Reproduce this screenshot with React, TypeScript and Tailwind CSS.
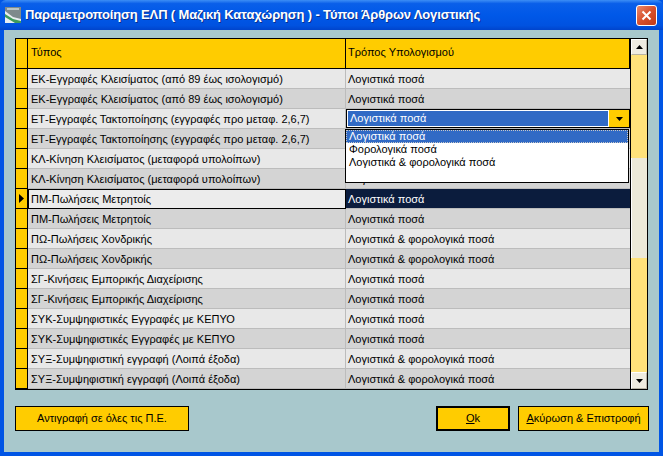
import React from "react";

type Row = { type: string; calc: string };

const rows: Row[] = [
  { type: "ΕΚ-Εγγραφές Κλεισίματος (από 89 έως ισολογισμό)", calc: "Λογιστικά ποσά" },
  { type: "ΕΚ-Εγγραφές Κλεισίματος (από 89 έως ισολογισμό)", calc: "Λογιστικά ποσά" },
  { type: "ΕΤ-Εγγραφές Τακτοποίησης (εγγραφές προ μεταφ. 2,6,7)", calc: "Λογιστικά ποσά" },
  { type: "ΕΤ-Εγγραφές Τακτοποίησης (εγγραφές προ μεταφ. 2,6,7)", calc: "" },
  { type: "ΚΛ-Κίνηση Κλεισίματος (μεταφορά υπολοίπων)", calc: "" },
  { type: "ΚΛ-Κίνηση Κλεισίματος (μεταφορά υπολοίπων)", calc: "Λογιστικά ποσά" },
  { type: "ΠΜ-Πωλήσεις Μετρητοίς", calc: "Λογιστικά ποσά" },
  { type: "ΠΜ-Πωλήσεις Μετρητοίς", calc: "Λογιστικά ποσά" },
  { type: "ΠΩ-Πωλήσεις Χονδρικής", calc: "Λογιστικά & φορολογικά ποσά" },
  { type: "ΠΩ-Πωλήσεις Χονδρικής", calc: "Λογιστικά & φορολογικά ποσά" },
  { type: "ΣΓ-Κινήσεις Εμπορικής Διαχείρισης", calc: "Λογιστικά ποσά" },
  { type: "ΣΓ-Κινήσεις Εμπορικής Διαχείρισης", calc: "Λογιστικά ποσά" },
  { type: "ΣΥΚ-Συμψηφιστικές Εγγραφές με ΚΕΠΥΟ", calc: "Λογιστικά ποσά" },
  { type: "ΣΥΚ-Συμψηφιστικές Εγγραφές με ΚΕΠΥΟ", calc: "Λογιστικά ποσά" },
  { type: "ΣΥΞ-Συμψηφιστική εγγραφή (Λοιπά έξοδα)", calc: "Λογιστικά & φορολογικά ποσά" },
  { type: "ΣΥΞ-Συμψηφιστική εγγραφή (Λοιπά έξοδα)", calc: "Λογιστικά & φορολογικά ποσά" },
];

const EDIT_ROW = 2;
const CURRENT_ROW = 6;

const Arrow = ({ up }: { up?: boolean }) => (
  <svg width="7" height="4" viewBox="0 0 7 4">
    <path d={up ? "M0 4 L3.5 0 L7 4 Z" : "M0 0 L7 0 L3.5 4 Z"} fill="#000" />
  </svg>
);

const App: React.FC = () => {
  return (
    <div
      className="w-[663px] h-[456px] flex flex-col bg-[#0055e5] text-[11px] text-black overflow-hidden"
      style={{ fontFamily: '"Liberation Sans", Arial, sans-serif' }}
    >
      {/* title bar */}
      <div className="h-[30px] shrink-0 flex items-center pl-[5px] pr-[6px] bg-[linear-gradient(to_bottom,#3d8ef5_0%,#0a5fe9_12%,#0058e8_50%,#0052e0_85%,#0044cc_100%)] rounded-t-[6px]">
        <svg width="16" height="16" viewBox="0 0 16 16" className="shrink-0">
          <rect x="0" y="0" width="16" height="16" fill="#7e8a8c" />
          <path d="M0 4 L8 10 L16 12 L16 16 L0 16 Z" fill="#e8eef0" />
          <path d="M0 7 L8 12 L16 14 L16 16 L10 16 L0 10 Z" fill="#3e9a5c" />
          <path d="M2 1 L14 1 L14 3 L2 3 Z" fill="#b9c4c6" />
        </svg>
        <span className="ml-[4px] text-white font-bold text-[13px] tracking-[-0.15px] whitespace-nowrap [text-shadow:1px_1px_0_#0a2f8c]">
          Παραμετροποίηση ΕΛΠ ( Μαζική Καταχώρηση ) - Τύποι Άρθρων Λογιστικής
        </span>
        <div className="ml-auto w-[21px] h-[21px] rounded-[3px] border border-white bg-[linear-gradient(135deg,#e98a6c_0%,#d8502c_50%,#c23a16_100%)] flex items-center justify-center">
          <svg width="11" height="11" viewBox="0 0 11 11">
            <path d="M1.5 1.5 L9.5 9.5 M9.5 1.5 L1.5 9.5" stroke="#fff" strokeWidth="2" />
          </svg>
        </div>
      </div>

      {/* client area */}
      <div className="flex-1 mx-[4px] mb-[4px] bg-[#a8c8cc] pt-[8px] px-[11px] flex flex-col">
        <div className="relative w-[633px] h-[352px] border border-black flex bg-[#d4d4d4]">
          <div className="flex-1 flex flex-col">
            {/* header */}
            <div className="h-[30px] flex bg-[#ffcc00] border-b border-black">
              <div className="w-[12px] border-r border-black" />
              <div className="w-[318px] border-r border-black pl-[3px] pt-[5px]">Τύπος</div>
              <div className="flex-1 border-r border-black pl-[2px] pt-[5px]">Τρόπος Υπολογισμού</div>
            </div>
            {rows.map((r, i) => {
              const light = i % 2 === 0;
              const bg = light ? "bg-[#e8e8e8]" : "bg-[#d4d4d4]";
              return (
                <div key={i} className="h-[20px] flex">
                  <div className="w-[12px] bg-[#ffcc00] border-r border-b border-black flex items-center justify-center">
                    {i === CURRENT_ROW && (
                      <svg width="5" height="9" viewBox="0 0 5 9">
                        <path d="M0 0 L5 4.5 L0 9 Z" fill="#000" />
                      </svg>
                    )}
                  </div>
                  <div
                    className={`w-[318px] border-r border-b border-[#bcbcbc] pl-[3px] pt-[1px] flex items-center whitespace-nowrap ${
                      i === CURRENT_ROW
                        ? "bg-[#ececec] outline outline-1 outline-black -outline-offset-1"
                        : bg
                    }`}
                  >
                    {r.type}
                  </div>
                  {i === EDIT_ROW ? (
                    <div className={`flex-1 border-b border-[#bcbcbc] ${bg} flex`}>
                      <div className="flex-1 flex border border-black">
                        <div className="flex-1 bg-[#316ac5] border border-white text-white pl-[2px] flex items-center">
                          {r.calc}
                        </div>
                        <div className="w-[20px] bg-[#ffcc00] flex items-center justify-center">
                          <Arrow />
                        </div>
                      </div>
                    </div>
                  ) : (
                    <div
                      className={`flex-1 border-b border-[#bcbcbc] pl-[2px] pt-[1px] flex items-center whitespace-nowrap ${
                        i === CURRENT_ROW ? "bg-[#0b1c3d] text-white" : bg
                      }`}
                    >
                      {r.calc}
                    </div>
                  )}
                </div>
              );
            })}
          </div>

          {/* vertical scrollbar */}
          <div className="w-[17px] flex flex-col border-l border-black">
            <div className="h-[16px] bg-[#efece0] border border-t-white border-l-white border-r-[#b8b4a4] border-b-[#b8b4a4] flex items-center justify-center">
              <Arrow up />
            </div>
            <div className="h-[103px] bg-[#ffe27a]" />
            <div className="h-[100px] bg-[#ece9d8] border-l border-white" />
            <div className="flex-1 bg-[#ffe27a]" />
            <div className="h-[17px] bg-[#efece0] border border-t-white border-l-white border-r-[#b8b4a4] border-b-[#b8b4a4] flex items-center justify-center">
              <Arrow />
            </div>
          </div>

          {/* open dropdown list */}
          <div className="absolute left-[329px] top-[90px] w-[284px] h-[54px] bg-white border border-black flex flex-col">
            <div className="h-[13px] bg-[#316ac5] text-white pl-[3px] leading-[13px] outline outline-1 outline-dotted outline-[#c8c8c8] -outline-offset-1">
              Λογιστικά ποσά
            </div>
            <div className="h-[13px] pl-[3px] leading-[13px]">Φορολογικά ποσά</div>
            <div className="h-[13px] pl-[3px] leading-[13px]">Λογιστικά &amp; φορολογικά ποσά</div>
          </div>
        </div>

        {/* buttons */}
        <div className="mt-[16px] flex items-start">
          <button className="w-[174px] h-[25px] bg-[#ffcc00] border border-black">
            Αντιγραφή σε όλες τις Π.Ε.
          </button>
          <div className="ml-auto flex gap-[8px] mr-[-1px]">
            <button className="w-[74px] h-[25px] bg-[#ffcc00] border-2 border-black">
              <span className="underline">O</span>k
            </button>
            <button className="w-[131px] h-[25px] bg-[#ffcc00] border border-black">
              <span className="underline">Α</span>κύρωση &amp; Επιστροφή
            </button>
          </div>
        </div>
      </div>
    </div>
  );
};

export default App;
